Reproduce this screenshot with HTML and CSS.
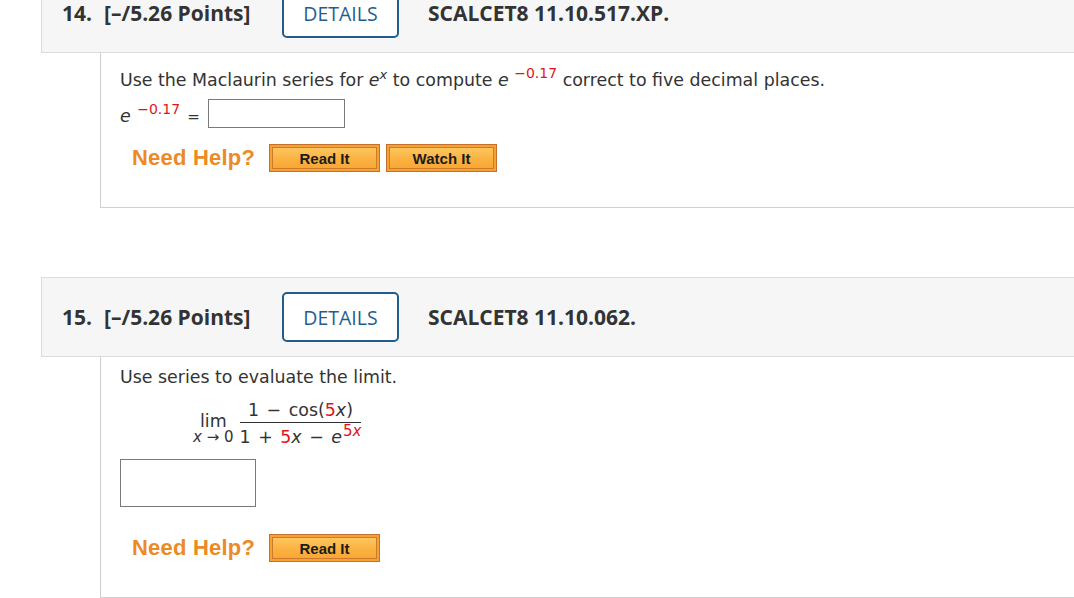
FILE: index.html
```html
<!DOCTYPE html>
<html>
<head>
<meta charset="utf-8">
<link rel="stylesheet" href="styles.css">
</head>
<body>
<div class="page">
  <section class="question">
    <div class="qhead">
      <span class="qnum">14.</span>
      <span class="qpts">[–/5.26 Points]</span>
      <span class="details">DETAILS</span>
      <span class="qcode">SCALCET8 11.10.517.XP.</span>
    </div>
    <div class="qbody q14">
      <p class="line l1">Use the Maclaurin series for <i>e</i><sup class="supx"><i>x</i></sup> to compute <i>e</i> <sup class="red">−0.17</sup> correct to five decimal places.</p>
      <div class="line l2"><span class="expr"><i>e</i> <sup class="red">−0.17</sup></span><span class="eq">=</span><span class="input small"></span></div>
      <div class="help">
        <span class="needhelp">Need Help?</span>
        <span class="btn"><span>Read It</span></span>
        <span class="btn"><span>Watch It</span></span>
      </div>
    </div>
  </section>

  <section class="question second">
    <div class="qhead">
      <span class="qnum">15.</span>
      <span class="qpts">[–/5.26 Points]</span>
      <span class="details">DETAILS</span>
      <span class="qcode">SCALCET8 11.10.062.</span>
    </div>
    <div class="qbody q15">
      <p class="line l1b">Use series to evaluate the limit.</p>
      <div class="limit">
        <div class="lim">
          <span class="limword">lim</span>
          <span class="limsub"><i>x</i> → 0</span>
        </div>
        <div class="frac">
          <span class="num">1 − cos(<span class="red">5</span><i>x</i>)</span>
          <span class="den">1 + <span class="red">5</span><i>x</i> − <i>e</i><sup class="red sup5">5<i>x</i></sup></span>
        </div>
      </div>
      <span class="input big"></span>
      <div class="help help2">
        <span class="needhelp">Need Help?</span>
        <span class="btn"><span>Read It</span></span>
      </div>
    </div>
  </section>
</div>
</body>
</html>
```
FILE: styles.css
```css
html, body {
  margin: 0;
  padding: 0;
  background: #fff;
}
.page {
  margin-top: -27px;
  width: 1074px;
  overflow: hidden;
}
.question.second {
  margin-top: 69px;
}
.qhead {
  margin-left: 41px;
  height: 78px;
  background: #f6f6f6;
  border: 1px solid #dcdcdc;
  border-right: none;
  display: flex;
  align-items: center;
  padding-left: 20px;
  font-family: "Open Sans", sans-serif;
  font-weight: 700;
  font-size: 21px;
  color: #333;
}
.qnum {
  width: 42px;
}
.qpts {
  width: 178px;
}
.details {
  box-sizing: border-box;
  width: 117px;
  height: 50px;
  border: 2px solid #1f5e8c;
  border-radius: 5px;
  display: flex;
  align-items: center;
  justify-content: center;
  font-weight: 400;
  font-size: 19.5px;
  color: #1f5e8c;
  background: #fff;
}
.qcode {
  margin-left: 29px;
}
.qbody {
  margin-left: 100px;
  border-left: 1px solid #cfcfcf;
  border-bottom: 1px solid #cfcfcf;
  padding-left: 19px;
  font-family: "DejaVu Sans", Verdana, sans-serif;
  font-size: 17.4px;
  color: #333;
  display: flex;
  flex-direction: column;
  align-items: flex-start;
}
.line {
  margin: 0;
  line-height: 24px;
}
.q14 {
  padding-top: 15px;
  padding-bottom: 35px;
}
.q15 {
  padding-top: 8px;
  padding-bottom: 35px;
}
sup {
  font-size: 14px;
  line-height: 0;
  vertical-align: 8px;
}
.supx {
  font-size: 13px;
  vertical-align: 7px;
}
.red {
  color: #e0151b;
}
.l2 {
  display: flex;
  align-items: center;
  margin-top: 7px;
}
.expr {
  position: relative;
  top: 2px;
}
.l2 sup {
  margin-left: 1px;
}
.eq {
  margin-left: 7px;
  margin-right: 8px;
  position: relative;
  top: 3px;
  font-size: 15px;
}
.input {
  display: block;
  box-sizing: border-box;
  border: 1px solid #7a7a7a;
  background: #fff;
}
.input.small {
  width: 137px;
  height: 29px;
}
.input.big {
  width: 136px;
  height: 48px;
  margin-top: 11px;
}
.help {
  display: flex;
  align-items: center;
  margin-top: 16px;
  padding-left: 12px;
}
.help2 {
  margin-top: 27px;
}
.needhelp {
  font-family: "Liberation Sans", Arial, sans-serif;
  font-weight: 700;
  font-size: 22px;
  letter-spacing: 0.2px;
  color: #ec8a25;
  width: 137px;
}
.btn {
  box-sizing: border-box;
  width: 111px;
  height: 28px;
  border: 1px solid #c4702c;
  background: #f5a235;
  padding: 2px;
  margin-right: 6px;
  display: flex;
}
.btn span {
  flex: 1;
  border: 1px solid #cf7a2a;
  background: linear-gradient(#fdc660, #fbb443 50%, #f9a735);
  display: flex;
  align-items: center;
  justify-content: center;
  font-family: "Liberation Sans", Arial, sans-serif;
  font-weight: 700;
  font-size: 15px;
  color: #1c1c1c;
}
.limit {
  display: flex;
  align-items: flex-end;
  margin-left: 73px;
  margin-top: 10px;
}
.lim {
  display: flex;
  flex-direction: column;
  align-items: center;
}
.limword {
  font-size: 17.4px;
  line-height: 16px;
}
.limsub {
  font-size: 15px;
  line-height: 16px;
  margin-bottom: 3px;
}
.frac {
  display: flex;
  flex-direction: column;
  align-items: center;
  margin-left: 6px;
  font-size: 17.4px;
  line-height: 22px;
  word-spacing: 2px;
}
.num {
  border-bottom: 1px solid #333;
  padding: 0 4px 1px;
  align-self: stretch;
  text-align: center;
}
.den {
  padding-top: 3px;
}
.sup5 {
  font-size: 15px;
  vertical-align: 7px;
  margin-left: 1px;
}
```
